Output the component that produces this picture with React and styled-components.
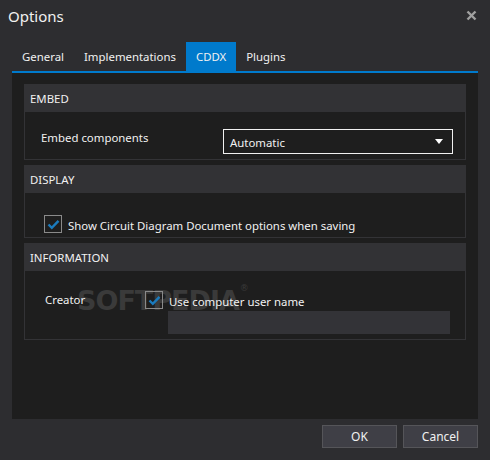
import React, { useState } from "react";
import styled, { createGlobalStyle } from "styled-components";

const GlobalStyle = createGlobalStyle`
    *, *::before, *::after {
        box-sizing: border-box;
    }
    html, body {
        margin: 0;
        padding: 0;
        background: #2d2d30;
    }
    body {
        font-family: "Noto Sans", "Open Sans", sans-serif;
        color: #f1f1f1;
    }
`;

const tabs = ["General", "Implementations", "CDDX", "Plugins"];

function Check({ checked }) {
    return (
        <Box>
            {checked && (
                <svg width="13" height="11" viewBox="0 0 13 11">
                    <path d="M1.5 5.5 L4.8 8.8 L11.5 1.8" fill="none" stroke="#1b7bbd" strokeWidth="2.4" />
                </svg>
            )}
        </Box>
    );
}

function Section({ title, children, height }) {
    return (
        <Group>
            <GroupHeader>{title}</GroupHeader>
            <GroupBody style={{ height }}>{children}</GroupBody>
        </Group>
    );
}

export default function App() {
    const [active, setActive] = useState("CDDX");

    return (
        <Window>
            <GlobalStyle />
            <TitleBar>
                <Title>Options</Title>
                <Close>
                    <svg width="11" height="11" viewBox="0 0 11 11">
                        <path d="M1.5 1.5 L9.5 9.5 M9.5 1.5 L1.5 9.5" stroke="#a0a0a0" strokeWidth="2.4" />
                    </svg>
                </Close>
            </TitleBar>
            <TabBar>
                {tabs.map(t => (
                    <Tab key={t} $active={t === active} onClick={() => setActive(t)}>{t}</Tab>
                ))}
            </TabBar>
            <Panel>
                <Section title="EMBED" height={48}>
                    <Row>
                        <Label>Embed components</Label>
                        <Combo>
                            <span>Automatic</span>
                            <svg width="8" height="5" viewBox="0 0 8 5">
                                <path d="M0 0 H8 L4 5 Z" fill="#ffffff" />
                            </svg>
                        </Combo>
                    </Row>
                </Section>
                <Section title="DISPLAY" height={45}>
                    <CheckRow>
                        <Check checked />
                        <span>Show Circuit Diagram Document options when saving</span>
                    </CheckRow>
                </Section>
                <Section title="INFORMATION" height={69}>
                    <Watermark>SOFTPEDIA<sup>®</sup></Watermark>
                    <InfoRow>
                        <CreatorLabel>Creator</CreatorLabel>
                        <InfoFields>
                            <CheckRow $tight>
                                <Check checked />
                                <span>Use computer user name</span>
                            </CheckRow>
                            <TextField />
                        </InfoFields>
                    </InfoRow>
                </Section>
            </Panel>
            <Footer>
                <Button>OK</Button>
                <Button>Cancel</Button>
            </Footer>
        </Window>
    );
}

const Window = styled.div`
    width: 490px;
    height: 460px;
    background: #2d2d30;
    display: flex;
    flex-direction: column;
    padding: 0 12px;
    font-size: 11.4px;
`;

const TitleBar = styled.div`
    height: 34px;
    display: flex;
    align-items: center;
    justify-content: space-between;
    margin-left: -4px;
`;

const Title = styled.div`
    font-size: 15px;
    color: #f1f1f1;
    margin-top: -3px;
`;

const Close = styled.div`
    display: flex;
    margin-right: 1px;
    margin-top: -4px;
`;

const TabBar = styled.div`
    display: flex;
    height: 31px;
    margin-top: 8px;
    border-bottom: 2px solid #007acc;
`;

const Tab = styled.div`
    display: flex;
    align-items: center;
    padding: 0 10px;
    height: 100%;
    cursor: pointer;
    color: #f1f1f1;
    background: ${p => (p.$active ? "#007acc" : "transparent")};
`;

const Panel = styled.div`
    flex: 0 0 346px;
    background: #1e1e1e;
    padding: 11px 12px 0 12px;
    display: flex;
    flex-direction: column;
    gap: 5px;
`;

const Group = styled.div`
    display: flex;
    flex-direction: column;
`;

const GroupHeader = styled.div`
    height: 28px;
    display: flex;
    align-items: center;
    padding: 1px 0 0 6px;
    background: #323235;
    color: #f1f1f1;
`;

const GroupBody = styled.div`
    position: relative;
    border: 1px solid #333336;
    border-top: none;
`;

const Row = styled.div`
    display: flex;
    align-items: center;
    padding: 17px 12px 0 16px;
`;

const Label = styled.div`
    width: 182px;
    margin-top: -8px;
`;

const Combo = styled.div`
    flex: 1;
    height: 25px;
    border: 1px solid #f1f1f1;
    display: flex;
    align-items: center;
    justify-content: space-between;
    padding: 0 9px 0 6px;
    span {
        margin-top: 1px;
    }
`;

const CheckRow = styled.div`
    display: flex;
    align-items: center;
    gap: 6px;
    padding: ${p => (p.$tight ? "0" : "22px 0 0 19px")};
    span {
        margin-top: 2px;
    }
`;

const Box = styled.div`
    width: 18px;
    height: 18px;
    border: 1px solid #8a8a8a;
    display: flex;
    align-items: center;
    justify-content: center;
`;

const InfoRow = styled.div`
    position: relative;
    display: flex;
    padding: 20px 0 0 20px;
`;

const CreatorLabel = styled.div`
    width: 100px;
    margin-top: 1px;
`;

const InfoFields = styled.div`
    display: flex;
    flex-direction: column;
    gap: 2px;
`;

const TextField = styled.div`
    width: 282px;
    height: 23px;
    margin-left: 23px;
    background: #333337;
`;

const Watermark = styled.div`
    position: absolute;
    left: 52px;
    top: 14px;
    font-family: "DejaVu Sans", sans-serif;
    font-weight: bold;
    font-size: 27px;
    letter-spacing: -1px;
    color: #3a3a3a;
    pointer-events: none;
    sup {
        font-size: 9px;
        font-weight: normal;
        vertical-align: top;
        position: relative;
        top: -2px;
        margin-left: 1px;
    }
`;

const Footer = styled.div`
    display: flex;
    justify-content: flex-end;
    gap: 6px;
    padding-top: 6px;
`;

const Button = styled.div`
    width: 75px;
    height: 23px;
    background: #3f3f46;
    border: 1px solid #555559;
    color: #f1f1f1;
    display: flex;
    align-items: center;
    justify-content: center;
    font-size: 12px;
`;
